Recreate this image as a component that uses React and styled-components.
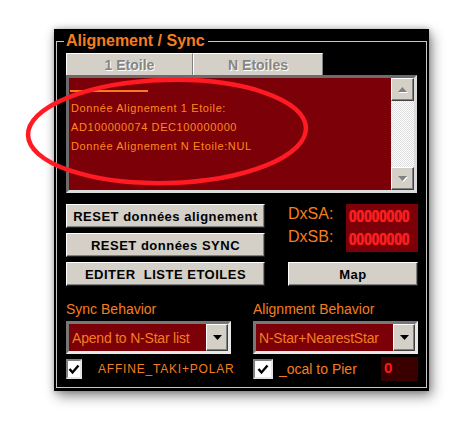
import React from "react";
import styled, { createGlobalStyle } from "styled-components";

const ARIAL = `"Liberation Sans", Arial, sans-serif`;

const ORANGE = "#f57d1f";
const DARK_RED = "#7b0008";
const FACE = "#d4d0c8";

const GlobalStyle = createGlobalStyle`
  html, body {
    margin: 0;
    padding: 0;
    background: #ffffff;
  }
  body {
    font-family: ${ARIAL};
  }
`;

const Page = styled.div`
  position: relative;
  width: 467px;
  height: 421px;
  box-sizing: border-box;
  padding: 29px 0 0 54px;
  overflow: hidden;
`;

const Panel = styled.div`
  width: 375px;
  height: 362px;
  box-sizing: border-box;
  background: #000;
  padding: 3px 2px 3px 2px;
  box-shadow: 3px 5px 12px rgba(0, 0, 0, 0.45), 0 0 6px rgba(0, 0, 0, 0.25);
`;

const Group = styled.fieldset`
  margin: 0;
  height: 100%;
  box-sizing: border-box;
  border: 1px solid #c6c6c6;
  padding: 0 9px 0 9px;
  min-width: 0;
`;

const Legend = styled.legend`
  margin-left: -2px;
  padding: 0 3px 0 2px;
  font: bold 16px/18px ${ARIAL};
  color: ${ORANGE};
`;

const Tabs = styled.div`
  display: flex;
  height: 22px;
  margin-top: 3px;
`;

const Tab = styled.div`
  width: ${(p) => p.$w}px;
  box-sizing: border-box;
  background: ${FACE};
  border-top: 1px solid #ffffff;
  border-left: 1px solid #ffffff;
  border-right: 1px solid #808080;
  display: flex;
  align-items: center;
  justify-content: center;
  font: bold 14px ${ARIAL};
  color: #858585;
  text-shadow: 1px 1px 0 #ffffff;
`;

const TextBox = styled.div`
  display: flex;
  height: 118px;
  box-sizing: border-box;
  border: 3px solid;
  border-color: #6c6c6c #dcdcdc #dcdcdc #6c6c6c;
`;

const TextArea = styled.div`
  flex: 1;
  background: ${DARK_RED};
  padding: 12px 0 0 1px;
  font: 11px/19px ${ARIAL};
  letter-spacing: 0.6px;
  color: #ff8a1c;
`;

const Rule = styled.div`
  width: 78px;
  height: 2px;
  background: ${ORANGE};
  margin-bottom: 7px;
`;

const Line = styled.div`
  padding-left: 1px;
  white-space: pre;
`;

const ScrollBar = styled.div`
  width: 23px;
  display: flex;
  flex-direction: column;
`;

const ScrollButton = styled.div`
  height: 23px;
  box-sizing: border-box;
  background: ${FACE};
  border: 1px solid;
  border-color: #ffffff #404040 #404040 #ffffff;
  box-shadow: inset -1px -1px 0 #808080;
  display: flex;
  align-items: center;
  justify-content: center;
`;

const Track = styled.div`
  flex: 1;
  background: repeating-conic-gradient(#ffffff 0 25%, #dedede 0 50%) 0 0 / 2px 2px;
`;

const Controls = styled.div`
  display: grid;
  grid-template-columns: 199px 130px;
  grid-template-rows: 24px 24px 24px;
  column-gap: 23px;
  row-gap: 5px;
  margin-top: 11px;
`;

const Button = styled.button`
  margin: 0;
  padding: 0;
  box-sizing: border-box;
  width: 100%;
  height: 100%;
  background: ${FACE};
  border: 1px solid;
  border-color: #ffffff #202020 #202020 #ffffff;
  box-shadow: inset -1px -1px 0 #808080;
  font: bold 13px ${ARIAL};
  letter-spacing: 0.5px;
  color: #000;
  white-space: pre;
`;

const DxBlock = styled.div`
  grid-row: 1 / span 2;
  grid-column: 2;
  display: flex;
`;

const DxLabels = styled.div`
  width: 58px;
  margin-top: -2px;
  font: 16px/23px ${ARIAL};
  color: ${ORANGE};
`;

const DxDisplay = styled.div`
  width: 72px;
  height: 48px;
  background: ${DARK_RED};
  box-sizing: border-box;
  padding: 1px 0 0 3px;
  font: bold 17px/23px ${ARIAL};
  color: #ff1a1a;
  text-shadow: 0 0 1px #ff4040;
`;

const Digits = styled.div`
  transform: scaleX(0.8);
  transform-origin: left center;
  white-space: nowrap;
`;

const Behaviors = styled.div`
  display: grid;
  grid-template-columns: 165px 165px;
  column-gap: 22px;
  margin-top: 14px;
`;

const Column = styled.div`
  display: flex;
  flex-direction: column;
`;

const Caption = styled.div`
  font: 14px/18px ${ARIAL};
  color: ${ORANGE};
`;

const Combo = styled.div`
  margin-top: 3px;
  height: 33px;
  box-sizing: border-box;
  display: flex;
  border: 3px solid;
  border-color: #777777 #e8e8e8 #e8e8e8 #777777;
  background: ${DARK_RED};
`;

const ComboText = styled.div`
  flex: 1;
  display: flex;
  align-items: center;
  padding-left: 3px;
  font: 14px ${ARIAL};
  letter-spacing: -0.2px;
  color: ${ORANGE};
`;

const ComboButton = styled.div`
  width: 22px;
  box-sizing: border-box;
  background: ${FACE};
  border: 1px solid;
  border-color: #ffffff #404040 #404040 #ffffff;
  box-shadow: inset -1px -1px 0 #808080;
  display: flex;
  align-items: center;
  justify-content: center;
`;

const CheckRow = styled.div`
  display: flex;
  align-items: center;
  margin-top: 2px;
  height: 26px;
  gap: ${(p) => p.$gap}px;
`;

const CheckBox = styled.div`
  width: 20px;
  height: 20px;
  box-sizing: border-box;
  background: #ffffff;
  border: 2px solid;
  border-color: #808080 #e4e4e4 #e4e4e4 #808080;
  display: flex;
  align-items: center;
  justify-content: center;
`;

const CheckLabel = styled.div`
  font: ${(p) => (p.$spaced ? "12px" : "14px")} ${ARIAL};
  letter-spacing: ${(p) => (p.$spaced ? "0.8px" : "0")};
  color: ${ORANGE};
  white-space: nowrap;
`;

const Offset = styled.div`
  margin-left: auto;
  width: 37px;
  height: 24px;
  background: #3a0000;
  box-sizing: border-box;
  padding: 2px 0 0 3px;
  font: bold 15px ${ARIAL};
  color: #ff1a1a;
`;

const Annotation = styled.svg`
  position: absolute;
  left: 0;
  top: 0;
  pointer-events: none;
`;

const Arrow = ({ down, color = "#808080", shadow = true }) => (
  <svg width="11" height="7" viewBox="0 0 11 7">
    {shadow && (
      <polygon
        points={down ? "1,1 10,1 5.5,6" : "1,6 10,6 5.5,1"}
        fill="#ffffff"
        transform="translate(1 1)"
      />
    )}
    <polygon points={down ? "1,1 10,1 5.5,6" : "1,6 10,6 5.5,1"} fill={color} />
  </svg>
);

const Check = () => (
  <svg width="12" height="11" viewBox="0 0 12 11">
    <polyline points="1.5,5 4.5,8.5 10.5,1.5" fill="none" stroke="#000" strokeWidth="2.4" />
  </svg>
);

const Dropdown = ({ value }) => (
  <Combo>
    <ComboText>{value}</ComboText>
    <ComboButton>
      <Arrow down color="#000" shadow={false} />
    </ComboButton>
  </Combo>
);

export default function App() {
  return (
    <>
      <GlobalStyle />
      <Page>
        <Panel>
          <Group>
            <Legend>Alignement / Sync</Legend>
            <Tabs>
              <Tab $w={127}>1 Etoile</Tab>
              <Tab $w={130}>N Etoiles</Tab>
            </Tabs>
            <TextBox>
              <TextArea>
                <Rule />
                <Line>Donnée Alignement 1 Etoile:</Line>
                <Line>AD100000074 DEC100000000</Line>
                <Line>Donnée Alignement N Etoile:NUL</Line>
              </TextArea>
              <ScrollBar>
                <ScrollButton>
                  <Arrow />
                </ScrollButton>
                <Track />
                <ScrollButton>
                  <Arrow down />
                </ScrollButton>
              </ScrollBar>
            </TextBox>

            <Controls>
              <Button>RESET données alignement</Button>
              <DxBlock>
                <DxLabels>
                  <div>DxSA:</div>
                  <div>DxSB:</div>
                </DxLabels>
                <DxDisplay>
                  <Digits>00000000</Digits>
                  <Digits>00000000</Digits>
                </DxDisplay>
              </DxBlock>
              <Button>RESET données SYNC</Button>
              <Button>EDITER  LISTE ETOILES</Button>
              <Button>Map</Button>
            </Controls>

            <Behaviors>
              <Column>
                <Caption>Sync Behavior</Caption>
                <Dropdown value="Apend to N-Star list" />
                <CheckRow $gap={16}>
                  <CheckBox>
                    <Check />
                  </CheckBox>
                  <CheckLabel $spaced>AFFINE_TAKI+POLAR</CheckLabel>
                </CheckRow>
              </Column>
              <Column>
                <Caption>Alignment Behavior</Caption>
                <Dropdown value="N-Star+NearestStar" />
                <CheckRow $gap={6}>
                  <CheckBox>
                    <Check />
                  </CheckBox>
                  <CheckLabel>_ocal to Pier</CheckLabel>
                  <Offset>0</Offset>
                </CheckRow>
              </Column>
            </Behaviors>
          </Group>
        </Panel>
        <Annotation width="467" height="421" viewBox="0 0 467 421">
          <ellipse
            cx="167"
            cy="131.5"
            rx="139"
            ry="51.5"
            fill="none"
            stroke="#ff1a24"
            strokeWidth="4.5"
            transform="rotate(-1.5 167 131.5)"
          />
        </Annotation>
      </Page>
    </>
  );
}
